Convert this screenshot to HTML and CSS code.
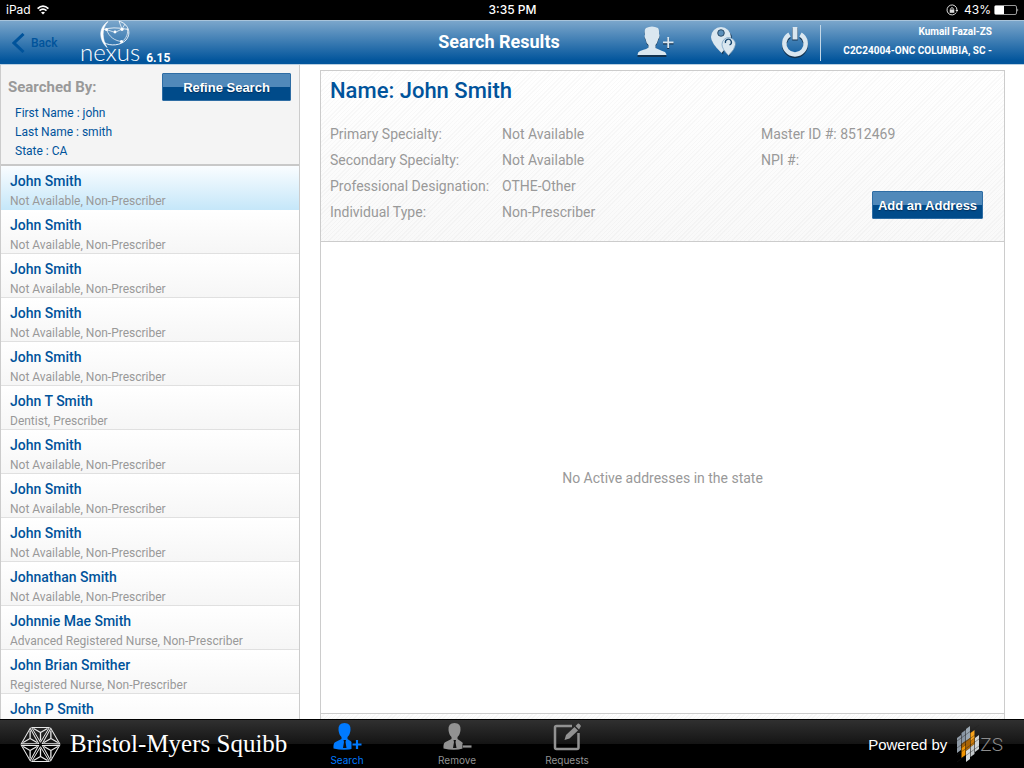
FILE: index.html
```html
<!DOCTYPE html>
<html lang="en">
<head>
<meta charset="utf-8">
<title>Search Results</title>
<link rel="stylesheet" href="styles.css">
</head>
<body>
<div class="status">
  <div class="status-left"><span>iPad</span>
    <svg width="12" height="10" viewBox="0 0 12 10" fill="none" stroke="#fff" stroke-width="1.7"><path d="M.6 3.6Q6-1.4 11.4 3.6M2.5 5.7Q6 2.5 9.5 5.7"/><path d="M6 9.600L4 7.500Q6 5.900 8 7.500Z" fill="#fff" stroke="none"/></svg>
  </div>
  <div class="status-time">3:35 PM</div>
  <div class="status-right">
    <svg width="12" height="12" viewBox="0 0 12 12" fill="none" stroke="#ddd"><path d="M10.300 8.500A5 5 0 1 1 11 6"/><path d="M9.300 6h3L10.900 8Z" fill="#ddd" stroke="none"/><rect x="3.700" y="5.500" width="4.600" height="3.300" fill="#ddd" stroke="none"/><path d="M4.700 5.500V4.500Q6 2.600 7.300 4.500V5.500"/></svg>
    <span>43%</span>
    <svg width="25" height="10" viewBox="0 0 25 10"><rect x=".5" y=".5" width="22" height="9" rx="1.500" fill="none" stroke="#999"/><rect x="1" y="1" width="9" height="8" fill="#fff"/><path d="M23.500 3.300q1.500 1.700 0 3.400z" fill="#fff"/></svg>
  </div>
</div>

<header class="navbar">
  <div class="nav-left">
    <button class="back" type="button"><svg width="13" height="20" viewBox="0 0 13 20" fill="none" stroke="#00539b" stroke-width="3"><path d="M11.500 1L2 10l9.500 9"/></svg><span>Back</span></button>
    <div class="nexus">
      <div class="nexus-mark">
        <svg class="globe" width="32" height="28" viewBox="0 0 32 28" fill="none" stroke="#fff"><path d="M9 1.500C-1 8 0 20 8 27.500C3.500 20 1.800 9 9 1.500Z" fill="#fff" stroke-width=".6"/><path d="M20 1.200C29 3.500 33 13 27 20C22 25.500 11 26.500 5 22.500" stroke-width=".9"/><path d="M3 10Q14 6 29 9.500" stroke-width=".8"/><path d="M7.500 9.500L16 12.500L23 9L26 4M7.500 9.500C10 17 16 21 23 21.500C27 19 30 13 28 8M20 1.200L23 9" stroke-width=".7"/><g fill="#fff" stroke="none"><circle cx="7.500" cy="9.500" r="1.500"/><circle cx="16" cy="12" r="1.400"/><circle cx="23" cy="9.300" r="1.600"/><circle cx="22.500" cy="21.500" r="1.600"/></g></svg>
        <span class="nexus-word">nexus</span>
      </div>
      <span class="version">6.15</span>
    </div>
  </div>
  <h1 class="title">Search Results</h1>
  <div class="nav-right">
    <button class="nav-icon" type="button" aria-label="Add person"><svg width="38" height="34" viewBox="0 0 38 34"><path d="M12 2Q18-1 24 2Q25.500 4 25 8Q26 9 25 12Q24 13 24 14Q23 18 21.500 19V22Q29 25.500 31 26Q32.500 28 32.500 30H3.500Q3.500 26 6 25Q14 22.500 14.500 21.500V19Q12 17 11.500 13Q10 11 11 8.500Q10 4 12 2Z" transform="translate(-3 1)" fill="#14334f"/><path d="M12 2Q18-1 24 2Q25.500 4 25 8Q26 9 25 12Q24 13 24 14Q23 18 21.500 19V22Q29 25.500 31 26Q32.500 28 32.500 29H3.500Q3.500 26 6 25Q14 22.500 14.500 21.500V19Q12 17 11.500 13Q10 11 11 8.500Q10 4 12 2Z" transform="translate(-3 0)" fill="#dae7f0"/><path d="M26 17.500h10.500M31.200 12v11" stroke="#14334f" stroke-width="2"/><path d="M26 16.300h10.500M31.200 11v11" stroke="#dae7f0" stroke-width="1.800"/></svg></button>
    <button class="nav-icon" type="button" aria-label="Locations"><svg width="28" height="34" viewBox="0 0 28 34" fill-rule="evenodd"><g transform="translate(1 1.500)" fill="#14334f"><path d="M11 1a10 10 0 0 1 10 10l4 6-7 12-5-6-1 4C8 22 1 16 1 11A10 10 0 0 1 11 1Z"/></g><path d="M11 1A10 10 0 0 1 21 11Q20 18 11.500 27Q1 17 1 11A10 10 0 0 1 11 1Z" fill="#dae7f0"/><circle cx="11" cy="7" r="3.300" fill="#5b8fba" stroke="#14334f" stroke-width=".8"/><path d="M18.500 11.500A7 7 0 0 1 25.500 18.500Q25 23 18.500 29.500Q12 23 12 18.500A7 7 0 0 1 18.500 11.500Z" fill="#dae7f0" stroke="#6b98bd" stroke-width=".7"/><path d="M15.500 17a3 3 0 1 1 4 2" fill="none" stroke="#14446e" stroke-width="1.300"/></svg></button>
    <button class="nav-icon" type="button" aria-label="Log out"><svg width="28" height="34" viewBox="0 0 28 34" fill="none"><path d="M8.500 10A10.700 10.700 0 1 0 19.500 10" stroke="#14334f" stroke-width="4.500"/><path d="M14 1.500v13" stroke="#14334f" stroke-width="5.500"/><g stroke="#dae7f0"><path d="M8.500 8.500A10.700 10.700 0 1 0 19.500 8.500" stroke-width="4.500"/><path d="M14 1v12.500" stroke-width="5"/></g></svg></button>
    <div class="user"><span>Kumail Fazal-ZS</span><span>C2C24004-ONC COLUMBIA, SC -</span></div>
  </div>
</header>

<div class="body">
  <aside class="sidebar">
    <section class="criteria">
      <div class="criteria-head"><h2>Searched By:</h2><button class="action refine" type="button">Refine Search</button></div>
      <ul class="criteria-list"><li>First Name : john</li><li>Last Name : smith</li><li>State : CA</li></ul>
    </section>
    <ul class="results">
      <li class="result selected"><b>John Smith</b><span>Not Available, Non-Prescriber</span></li>
      <li class="result"><b>John Smith</b><span>Not Available, Non-Prescriber</span></li>
      <li class="result"><b>John Smith</b><span>Not Available, Non-Prescriber</span></li>
      <li class="result"><b>John Smith</b><span>Not Available, Non-Prescriber</span></li>
      <li class="result"><b>John Smith</b><span>Not Available, Non-Prescriber</span></li>
      <li class="result"><b>John T Smith</b><span>Dentist, Prescriber</span></li>
      <li class="result"><b>John Smith</b><span>Not Available, Non-Prescriber</span></li>
      <li class="result"><b>John Smith</b><span>Not Available, Non-Prescriber</span></li>
      <li class="result"><b>John Smith</b><span>Not Available, Non-Prescriber</span></li>
      <li class="result"><b>Johnathan Smith</b><span>Not Available, Non-Prescriber</span></li>
      <li class="result"><b>Johnnie Mae Smith</b><span>Advanced Registered Nurse, Non-Prescriber</span></li>
      <li class="result"><b>John Brian Smither</b><span>Registered Nurse, Non-Prescriber</span></li>
      <li class="result"><b>John P Smith</b></li>
    </ul>
  </aside>
  <main class="detail">
    <section class="profile">
      <h2>Name: John Smith</h2>
      <div class="facts">
        <dl>
          <dt>Primary Specialty:</dt><dd>Not Available</dd>
          <dt>Secondary Specialty:</dt><dd>Not Available</dd>
          <dt>Professional Designation:</dt><dd>OTHE-Other</dd>
          <dt>Individual Type:</dt><dd>Non-Prescriber</dd>
        </dl>
        <div class="ids"><p>Master ID #: 8512469</p><p>NPI #:</p><button class="action add" type="button">Add an Address</button></div>
      </div>
    </section>
    <div class="empty">No Active addresses in the state</div>
    <div class="strip"></div>
  </main>
</div>

<footer class="tabbar">
  <div class="bms">
    <svg width="41" height="37" viewBox="-20.500 -18.500 41 37" fill="none" stroke="#e8e8e8" stroke-width="1">
      <defs><g id="facet"><path d="M-8.900-17H8.900L0-2.200Z"/><path d="M-7-16L0-12L7-16M0-12V-4" stroke-width="1.300"/></g></defs>
      <use href="#facet"/><use href="#facet" transform="rotate(60)"/><use href="#facet" transform="rotate(120)"/><use href="#facet" transform="rotate(180)"/><use href="#facet" transform="rotate(240)"/><use href="#facet" transform="rotate(300)"/>
    </svg>
    <span>Bristol-Myers Squibb</span>
  </div>
  <nav class="tabs">
    <button class="tab active" type="button"><svg width="30" height="29" viewBox="0 0 30 29" fill="currentColor"><path d="M12.500 1Q19 1 18.500 8Q18 13 15.500 15V17L20.500 20.500V23H22V26.500Q12 29 1.500 26.500Q1 21 3.500 20L9.500 17V15Q7 13 6.500 8Q6 1 12.500 1Z"/><path d="M11.500 18h2.500l-.5 2 1 6h-3.500l1-6Z" fill="#111"/><path d="M19.500 18.500h7v9h-7z" fill="#070707"/><path d="M20.500 22.500h9M25 18v9" stroke="currentColor" stroke-width="2.200"/></svg><span>Search</span></button>
    <button class="tab" type="button"><svg width="30" height="29" viewBox="0 0 30 29" fill="currentColor"><path d="M12.500 1Q19 1 18.500 8Q18 13 15.500 15V17L20.500 20.500L21 23.500V26.500Q12 29 1.500 26.500Q1 21 3.500 20L9.500 17V15Q7 13 6.500 8Q6 1 12.500 1Z"/><path d="M11.500 18h2.500l-.5 2 1 6h-3.500l1-6Z" fill="#111"/><path d="M20.500 22h10v5h-10z" fill="#050505"/><path d="M21 24.500h8.500" stroke="currentColor" stroke-width="2.200"/></svg><span>Remove</span></button>
    <button class="tab" type="button"><svg width="30" height="29" viewBox="0 0 30 29" fill="currentColor"><path d="M20 4H4.500Q3 4 3 5.500V25.500Q3 27 4.500 27H25Q26.500 27 26.500 25.500V11" fill="none" stroke="currentColor" stroke-width="2.500"/><path d="M12.500 18L14 13L22.500 5L26 8.500L17.500 16.500ZM23.500 4L26 1.500Q27.500 1 29 4L27 7.500Z"/></svg><span>Requests</span></button>
  </nav>
  <div class="powered">
    <span>Powered by</span>
    <svg width="22" height="38" viewBox="0 0 22 38">
      <path d="M0 13l4-3v15l-4 3z" fill="#8f9aa5"/>
      <path d="M4.500 8l4-3v11l-4 3z" fill="#8996a3"/><path d="M4.500 19l4-3v4l-4 3z" fill="#a96508"/><path d="M4.500 23l4-3v10l-4 3z" fill="#f29400"/>
      <path d="M9 4l4-3v12l-4 3z" fill="#9aa7b2"/><path d="M9 16l4-3v10l-4 3z" fill="#a96508"/><path d="M9 26l4-3v11l-4 3z" fill="#d5d9db"/>
      <path d="M13.500 8l4-3v8l-4 3z" fill="#f7a21b"/><path d="M13.500 16l4-3v6l-4 3z" fill="#c97a0b"/><path d="M13.500 22l4-3v10l-4 3z" fill="#c3c8ca"/>
      <path d="M18 13l4-3v14l-4 3z" fill="#ced3d5"/>
      <path d="M0 23L22 7M0 30L22 14M0 16L22 0M0 37L22 21" stroke="#222" stroke-width=".4"/></svg>
    <span class="zs">ZS</span>
  </div>
</footer>
</body>
</html>
```
FILE: styles.css
```css
* { box-sizing: border-box; }

body {
  margin: 0;
  height: 100vh;
  display: flex;
  flex-direction: column;
  overflow: hidden;
  background: #fff;
  color: #999;
  font-family: Roboto, sans-serif;
}

h1, h2, p, ul, dl, dd { margin: 0; padding: 0; }
ul { list-style: none; }
button { font: inherit; padding: 0; border: 0; background: none; color: inherit; }
svg { display: block; flex: none; }

.status {
  height: 20px;
  flex: none;
  display: grid;
  grid-template-columns: 1fr auto 1fr;
  align-items: center;
  padding: 0 5px 0 6px;
  background: #000;
  color: #fff;
  font: 12px/20px Inter, sans-serif;
}
.status-left, .status-right { display: flex; align-items: center; gap: 6px; }
.status-right { justify-content: flex-end; gap: 3px; }
.status-right svg:first-child { margin-right: 3px; }
.status-time { font-weight: 500; }

.navbar {
  height: 45px;
  flex: none;
  display: flex;
  align-items: center;
  border-top: 1px solid #a8c4db;
  border-bottom: 1px solid #b9cfe1;
  background: linear-gradient(#7ba6cb, #02559c 92%);
  color: #fff;
}
.nav-left { width: 361px; height: 100%; display: flex; }
.back {
  width: 80px;
  display: flex;
  align-items: center;
  gap: 6px;
  padding-left: 12px;
  color: #00539b;
  font-size: 12px;
  font-weight: 500;
}
.nexus { display: flex; align-items: flex-end; gap: 6px; }
.nexus-mark { display: flex; flex-direction: column; }
.globe { margin: 0 0 -4px 19px; }
.nexus-word { font: 300 24px/16px Lato, sans-serif; padding-bottom: 4px; }
.version { font-size: 12px; line-height: 12px; font-weight: 700; }
.title { flex: 1; text-align: center; font-size: 18px; line-height: 20px; padding-bottom: 1px; font-weight: 700; }
.nav-right { width: 387px; height: 100%; display: flex; align-items: center; }
.nav-icon { margin-right: 35px; }
.nav-icon + .nav-icon { margin-right: 43px; }
.nav-icon:nth-child(3) { margin-right: 11px; }
.user {
  flex: 1;
  height: 36px;
  display: flex;
  flex-direction: column;
  gap: 5px;
  margin-right: 32px;
  border-left: 1px solid #c4d8e8;
  text-align: right;
  font-size: 10px;
  line-height: 14px;
  font-weight: 700;
  white-space: nowrap;
}

.body { flex: 1; min-height: 0; display: flex; }
.sidebar {
  width: 300px;
  flex: none;
  display: flex;
  flex-direction: column;
  overflow: hidden;
  border: solid #ccc;
  border-width: 0 1px;
}
.criteria { padding: 8px 8px 3px 7px; background: #f4f4f4; border-bottom: 2px solid #c8c8c8; }
.criteria-head { display: flex; justify-content: space-between; align-items: center; }
.criteria h2 { font-size: 15px; font-weight: 700; color: #999; }
.criteria-list { padding: 3px 7px 0; font-size: 12px; line-height: 19px; color: #00539b; }

.action {
  height: 28px;
  border: 1px solid #2e6da4;
  border-radius: 1px;
  background: linear-gradient(#5089ba 50%, #004b8a 50%);
  color: #fff;
  font: bold 13px "Liberation Sans", sans-serif;
  text-shadow: 0 1px 1px #00305c;
  white-space: nowrap;
}
.refine { width: 129px; }
.add { width: 111px; }

.results { flex: 1; min-height: 0; overflow: hidden; }
.result {
  height: 44px;
  padding: 5px 9px 0;
  border-bottom: 1px solid #e0e0e0;
  background: linear-gradient(#fff, #f6f6f6);
  font-size: 12px;
}
.result b { display: block; color: #00539b; font-size: 14px; line-height: 20px; font-weight: 500; }
.result span { display: block; line-height: 20px; }
.selected { background: linear-gradient(#fafdff, #c6e7f9); border-bottom-color: #c6e7f9; }

.detail {
  flex: 1;
  display: flex;
  flex-direction: column;
  margin: 5px 19px 0 20px;
  border: 1px solid #ccc;
  border-bottom: 0;
}
.profile, .strip {
  background: repeating-linear-gradient(135deg, #00000000 0 2px, #00000006 2px 3px), linear-gradient(#fff, #f9f9f9);
}
.profile { height: 171px; padding: 6px 21px 0 9px; border-bottom: 1px solid #ccc; }
.profile h2 { color: #00539b; font-size: 22px; line-height: 28px; font-weight: 500; }
.facts { display: flex; justify-content: space-between; margin-top: 16px; font-size: 14px; line-height: 26px; }
.facts dl { display: grid; grid-template-columns: 172px auto; align-content: start; }
.ids { width: 222px; display: flex; flex-direction: column; }
.add { align-self: flex-end; margin-top: 18px; }
.empty { flex: 1; display: flex; align-items: center; justify-content: center; font-size: 14px; }
.strip { height: 6px; border-top: 1px solid #ccc; }

.tabbar {
  height: 49px;
  flex: none;
  display: flex;
  border-top: 1px solid #000;
  background: linear-gradient(#303030, #141414 50%, #000 51%);
}
.bms { width: 292px; display: flex; align-items: center; gap: 9px; padding-left: 20px; color: #fff; font: 25px "Liberation Serif", serif; white-space: nowrap; }
.tabs { flex: 1; display: flex; }
.tab {
  width: 110px;
  display: flex;
  flex-direction: column;
  align-items: center;
  padding-top: 2px;
  color: #929292;
  font: 10px/16px Inter, sans-serif;
}
.tab span { margin-top: 1px; }
.active { color: #007aff; }
.powered { display: flex; align-items: center; padding-right: 21px; color: #fff; font: 15px "Liberation Sans", sans-serif; }
.powered svg { margin: 0 1px 0 10px; }
.zs { color: #8c8c8c; font: 300 19px Roboto, sans-serif; }
```
